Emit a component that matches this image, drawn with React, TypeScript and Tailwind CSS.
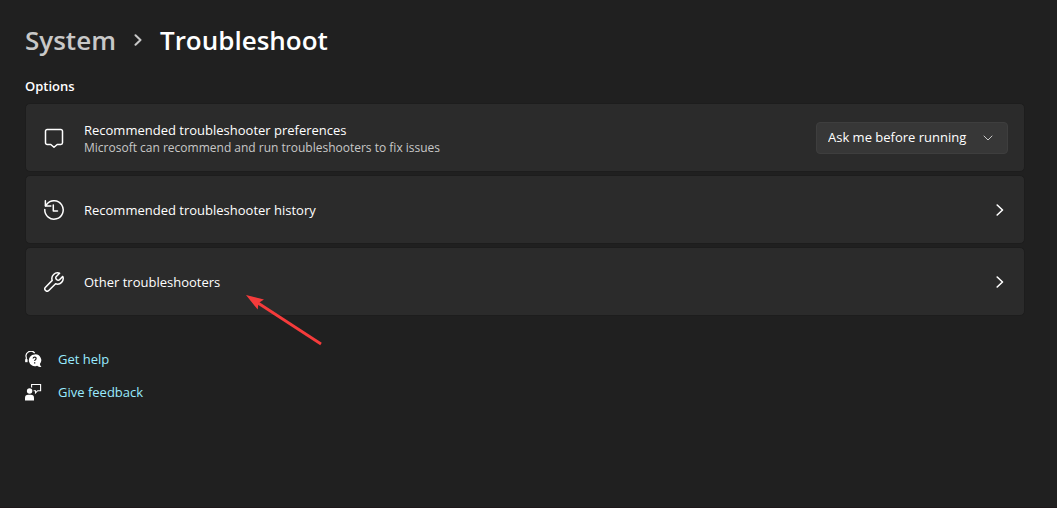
import { ReactNode } from "react"

function MessageIcon() {
    return (
        <svg width="20" height="20" viewBox="0 0 20 20" fill="none" stroke="currentColor" strokeWidth="1.5" strokeLinejoin="round" aria-hidden="true">
            <path d="M3.2 1.5h13.6a1.7 1.7 0 0 1 1.7 1.7v11.6a1.7 1.7 0 0 1-1.7 1.7h-3.6L10 19.3l-3.2-2.8H3.2a1.7 1.7 0 0 1-1.7-1.7V3.2a1.7 1.7 0 0 1 1.7-1.7z" />
        </svg>
    )
}

function HistoryIcon() {
    return (
        <svg width="20" height="20" viewBox="0 0 20 20" fill="none" stroke="currentColor" strokeWidth="1.5" strokeLinecap="round" strokeLinejoin="round" aria-hidden="true">
            <path d="M.8 9.5a9.2 9.2 0 1 0 2-5.3L1.6 5.8" />
            <path d="M1.4.8v5.2h5.4" />
            <path d="M9.3 5v6h4.2" />
        </svg>
    )
}

function WrenchIcon() {
    return (
        <svg width="20" height="20" viewBox="0 0 20 20" fill="none" stroke="currentColor" strokeWidth="1.5" strokeLinecap="round" strokeLinejoin="round" aria-hidden="true">
            <path d="M15.6 1.2a5.7 5.7 0 0 0-7.4 7.2l-6.7 6.8a2.3 2.3 0 0 0 3.3 3.3l6.8-6.7a5.7 5.7 0 0 0 7.2-7.4l-3.3 3.3a1.8 1.8 0 0 1-2.6 0l-.6-.6a1.8 1.8 0 0 1 0-2.6z" />
        </svg>
    )
}

function ChevronRight() {
    return (
        <svg width="8" height="12" viewBox="0 0 8 12" fill="none" stroke="currentColor" strokeWidth="1.6" strokeLinecap="round" strokeLinejoin="round" aria-hidden="true">
            <path d="M1.2 1l5.3 5-5.3 5" />
        </svg>
    )
}

function HelpIcon() {
    return (
        <svg width="17" height="17" viewBox="0 0 17 17" fill="none" aria-hidden="true">
            <path d="M1.3 11V6.5a4.8 4.8 0 0 1 8.4-4.4" stroke="white" strokeWidth="1.2" />
            <path d="M.2 8.2h2.4v3H.2z" fill="white" />
            <path d="M9.6 3.4a5.9 5.9 0 1 0 2.5 11.3c.9.7 2.3 1.3 4.3 1.3-.9-.9-1.4-1.9-1.5-3A5.9 5.9 0 0 0 9.6 3.4z" fill="white" />
            <path d="M8.1 7.5c.2-2 3.2-1.8 3 .1-.1 1.1-1.4 1.1-1.4 2.5" stroke="#202020" strokeWidth="1.2" />
            <path d="M9 11.2h1.3v1.3H9z" fill="#202020" />
        </svg>
    )
}

function FeedbackIcon() {
    return (
        <svg width="17" height="17" viewBox="0 0 17 17" fill="none" aria-hidden="true">
            <circle cx="4.6" cy="7" r="2.7" fill="white" />
            <path d="M0 16.5v-2.6a3.2 3.2 0 0 1 3.2-3.2h2.6A3.2 3.2 0 0 1 9 13.9v2.6z" fill="white" />
            <path d="M6.6 3.5v-3h9v6.2h-2.9L10.5 9V6.7H8.6" stroke="white" strokeWidth="1.1" />
        </svg>
    )
}

function NavCard({ icon, title, children }: { icon: ReactNode; title: string; children?: ReactNode }) {
    return (
        <div className="relative">
            <button type="button" className="flex min-h-[69px] w-full items-center rounded-[5px] border border-[#1d1d1d] bg-[#2b2b2b] pl-[18px] pr-5 text-left">
                {icon}
                <span className="ml-5 flex-1 text-[13px] leading-5">{title}</span>
                <ChevronRight />
            </button>
            {children}
        </div>
    )
}

export default function App() {
    return (
        <div className="min-h-screen border-b border-[#1e181a] bg-[#202020] pl-[25px] pr-8 pt-5 font-['Open_Sans','Noto_Sans',sans-serif] text-white">
            <nav aria-label="Breadcrumb" className="flex items-center text-[26px] font-semibold leading-10">
                <a href="#system" className="text-[#c8c8c8]">System</a>
                <svg className="mx-[18px] text-[#c8c8c8]" width="8" height="12" viewBox="0 0 8 12" fill="none" stroke="currentColor" strokeWidth="2" strokeLinecap="round" strokeLinejoin="round" aria-hidden="true">
                    <path d="M1.5 1.2l5 4.8-5 4.8" />
                </svg>
                <h1>Troubleshoot</h1>
            </nav>

            <h2 className="mt-4 text-[13px] font-semibold leading-5">Options</h2>

            <div className="mt-[7px] flex flex-col gap-[3px]">
                <div className="flex min-h-[69px] items-center rounded-[5px] border border-[#1d1d1d] bg-[#2b2b2b] pl-[18px] pr-4">
                    <MessageIcon />
                    <div className="ml-5 flex-1">
                        <label htmlFor="preference" className="block text-[13px] leading-5">Recommended troubleshooter preferences</label>
                        <p className="text-xs leading-4 text-[#c8c8c8]">Microsoft can recommend and run troubleshooters to fix issues</p>
                    </div>
                    <div className="relative">
                        <select id="preference" className="h-8 w-48 appearance-none rounded-[4px] border border-[#3e3e3e] bg-[#373737] pl-[11px] pr-8 text-[13px]">
                            <option>Ask me before running</option>
                        </select>
                        <svg className="pointer-events-none absolute right-[15px] top-3 text-[#c8c8c8]" width="10" height="8" viewBox="0 0 10 8" fill="none" stroke="currentColor" strokeLinecap="round" aria-hidden="true">
                            <path d="M1 2l4 4 4-4" />
                        </svg>
                    </div>
                </div>

                <NavCard icon={<HistoryIcon />} title="Recommended troubleshooter history" />

                <NavCard icon={<WrenchIcon />} title="Other troubleshooters">
                    <svg className="pointer-events-none absolute left-[221px] top-12" width="76" height="52" viewBox="0 0 76 52" aria-hidden="true">
                        <path d="M12 8l63 41" stroke="#f53b3b" strokeWidth="2.8" />
                        <path d="M0 0l18 4.5-5.5 3.5-.8 6.5z" fill="#f53b3b" />
                    </svg>
                </NavCard>
            </div>

            <div className="mt-[33px] flex flex-col items-start gap-[13px] text-[13px] leading-5 text-[#99ebff]">
                <a href="#help" className="flex items-center gap-4">
                    <HelpIcon />
                    Get help
                </a>
                <a href="#feedback" className="flex items-center gap-4">
                    <FeedbackIcon />
                    Give feedback
                </a>
            </div>
        </div>
    )
}
